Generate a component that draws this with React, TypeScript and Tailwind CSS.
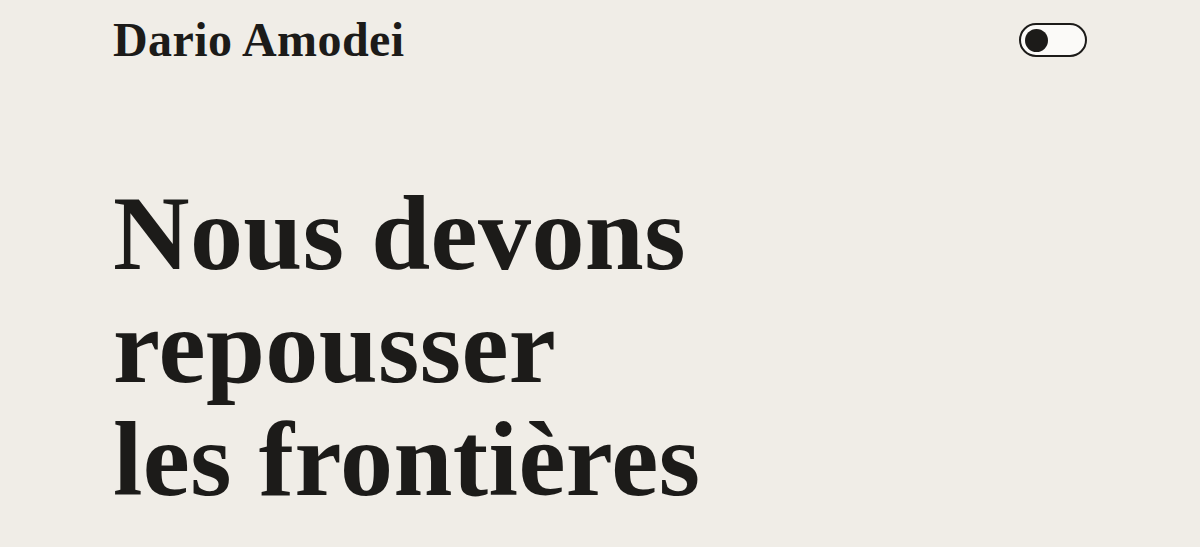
import { useState } from "react";

const SERIF = "font-['Liberation_Serif','Times_New_Roman',serif]";

const ThemeToggle = () => {
  const [dark, setDark] = useState(false);
  return (
    <button
      type="button"
      aria-label="Toggle theme"
      onClick={() => setDark((d) => !d)}
      className="flex h-[34px] w-[68px] items-center rounded-full border-2 border-[#1c1b19] bg-[#fbfaf8] px-[4px]"
    >
      <span
        className={`block h-[23px] w-[23px] rounded-full bg-[#1c1b19] transition-transform duration-300 ${
          dark ? "translate-x-[33px]" : "translate-x-0"
        }`}
      />
    </button>
  );
};

export default function App() {
  return (
    <div className={`min-h-screen bg-[#f0ede7] text-[#1c1b19] ${SERIF}`}>
      <div className="px-[113px]">
        {/* Top bar */}
        <header className="flex items-center justify-between pt-[16px]">
          <a href="#" className="text-[48px] leading-[48px] font-bold tracking-[0.4px]">
            Dario Amodei
          </a>
          <ThemeToggle />
        </header>

        {/* Hero title */}
        <h1 className="mt-[113px] text-[106px] leading-[113px] font-bold tracking-[0.4px]">
          Nous devons
          <br />
          repousser
          <br />
          les frontières
        </h1>
      </div>
    </div>
  );
}
